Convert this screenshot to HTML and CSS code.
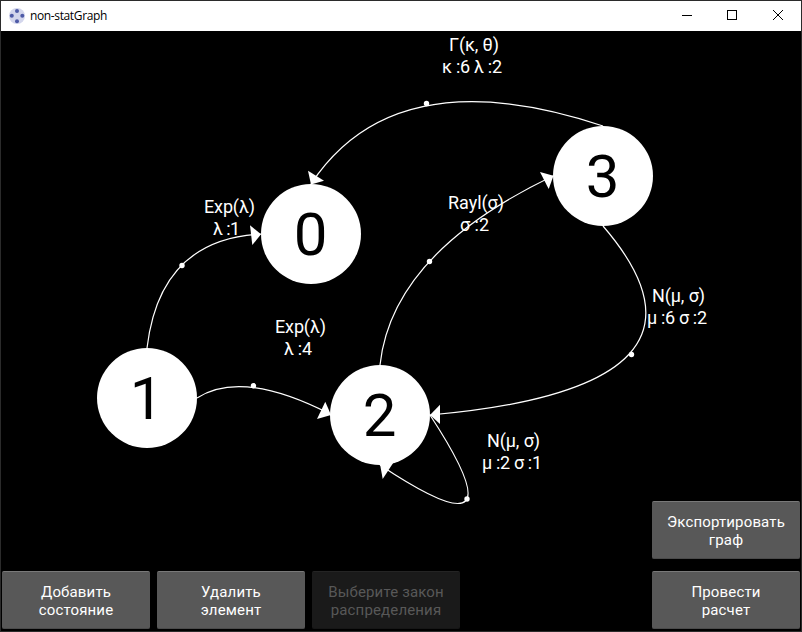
FILE: index.html
```html
<!DOCTYPE html>
<html lang="ru">
<head>
<meta charset="utf-8">
<title>non-statGraph</title>
<link rel="stylesheet" href="styles.css">
</head>
<body>
<div class="window">
  <header class="titlebar">
    <svg class="app-icon" width="16" height="16" viewBox="0 0 16 16">
      <circle cx="8" cy="8" r="8" fill="#d3d6ec"/>
      <g fill="#4f5ba7"><circle cx="8" cy="2.9" r="2"/><circle cx="2.8" cy="7.7" r="2"/><circle cx="13.3" cy="7.7" r="2"/><circle cx="8" cy="13.3" r="2"/></g>
    </svg>
    <span class="title">non-statGraph</span>
    <svg class="controls" width="138" height="30" viewBox="0 0 138 30" fill="none" stroke="#000" shape-rendering="crispEdges">
      <path d="M19 14.5h10"/>
      <rect x="64.5" y="9.5" width="9" height="9"/>
      <path d="M110 9l10 10M120 9l-10 10" shape-rendering="auto"/>
    </svg>
  </header>
  <main class="workspace">
    <svg class="graph" width="800" height="600" viewBox="1 31 800 600">
      <g class="edges">
        <path d="M147 348Q160 239 261 234"/>
        <path d="M197 398Q242 369 330 414"/>
        <path d="M380 365Q392 253 553 176"/>
        <path d="M603 126Q395 57 311 184"/>
        <path d="M603 226Q742 387.500 430 415"/>
        <path d="M430 415Q526 562 380 465"/>
      </g>
      <g class="arrows">
        <path d="M250 225.300L261 234.300L252.300 245z"/>
        <path d="M325.300 401.700L317 419L331 415z"/>
        <path d="M540 172L553.500 175.700L548.700 189z"/>
        <path d="M308 170.700L324 180.700L311 184.500z"/>
        <path d="M440 404.700V424L430 415z"/>
        <path d="M380 464L393.300 462.700L382.700 479z"/>
      </g>
      <g class="handles">
        <circle cx="182" cy="265.500" r="2.700"/>
        <circle cx="253.500" cy="385.800" r="2.700"/>
        <circle cx="429.500" cy="261.500" r="2.700"/>
        <circle cx="426.500" cy="103.500" r="2.700"/>
        <circle cx="631.500" cy="354.500" r="2.700"/>
        <circle cx="467" cy="499" r="2.700"/>
      </g>
      <g class="nodes">
        <circle cx="311" cy="234" r="50"/><text x="310.500" y="255">0</text>
        <circle cx="147" cy="398" r="50"/><text x="146.500" y="419">1</text>
        <circle cx="380" cy="415" r="50"/><text x="379.500" y="436">2</text>
        <circle cx="603" cy="176" r="50"/><text x="602.500" y="197">3</text>
      </g>
      <g class="labels">
        <text x="204" y="213" textLength="51">Exp(λ)</text><text x="213" y="235" textLength="27">λ :1</text>
        <text x="275" y="333" textLength="51">Exp(λ)</text><text x="284" y="355" textLength="28">λ :4</text>
        <text x="448" y="209" textLength="56">Rayl(σ)</text><text x="460" y="231" textLength="29">σ :2</text>
        <text x="449" y="51" textLength="50">Γ(κ, θ)</text><text x="442" y="73" textLength="60">κ :6 λ :2</text>
        <text x="652" y="302" textLength="53">N(μ, σ)</text><text x="647" y="324" textLength="60">μ :6 σ :2</text>
        <text x="487" y="447" textLength="53">N(μ, σ)</text><text x="482" y="469" textLength="60">μ :2 σ :1</text>
      </g>
    </svg>
    <div class="toolbar">
      <button class="btn">Добавить<br>состояние</button>
      <button class="btn">Удалить<br>элемент</button>
      <button class="btn" disabled>Выберите закон<br>распределения</button>
      <div class="actions">
        <button class="btn">Экспортировать<br>граф</button>
        <button class="btn">Провести<br>расчет</button>
      </div>
    </div>
  </main>
</div>
</body>
</html>
```
FILE: styles.css
```css
* { box-sizing: border-box; }
body { margin: 0; background: #000; overflow: hidden; }
.window { width: 802px; height: 632px; border: 1px solid #2b2b2b; display: flex; flex-direction: column; }
.titlebar { height: 30px; flex: none; background: #fff; display: flex; align-items: center; padding-left: 8px; }
.app-icon { margin-top: -1px; }
.title { margin-left: 5px; font: 12px/16px "Open Sans", sans-serif; color: #000; letter-spacing: -0.37px; }
.controls { margin-left: auto; }
.workspace { flex: 1; display: grid; background: #000; min-height: 0; }
.graph, .toolbar { grid-area: 1 / 1; }
.graph { display: block; font-family: Roboto, sans-serif; }
.edges { fill: none; stroke: #fff; stroke-width: 1.2; }
.arrows, .handles, .labels { fill: #fff; }
.nodes circle { fill: #fff; }
.nodes text { fill: #000; font-size: 60px; text-anchor: middle; }
.labels { font-size: 18px; }
.toolbar { align-self: end; display: flex; align-items: flex-end; gap: 7px; padding: 0 1px 2px; }
.actions { margin-left: auto; display: flex; flex-direction: column; gap: 12px; }
.btn {
  width: 148px; height: 58px; padding: 2px 0 0; border: 0; border-top: 1px solid #797979; border-bottom: 1px solid #4a4a4a;
  border-radius: 2px; background: #585858; color: #fff; font: 15px/18px Roboto, sans-serif; letter-spacing: 0.15px; text-align: center;
}
.btn:disabled { background: #1a1a1a; border-color: #242424 #161616 #161616; color: #585858; }
```
